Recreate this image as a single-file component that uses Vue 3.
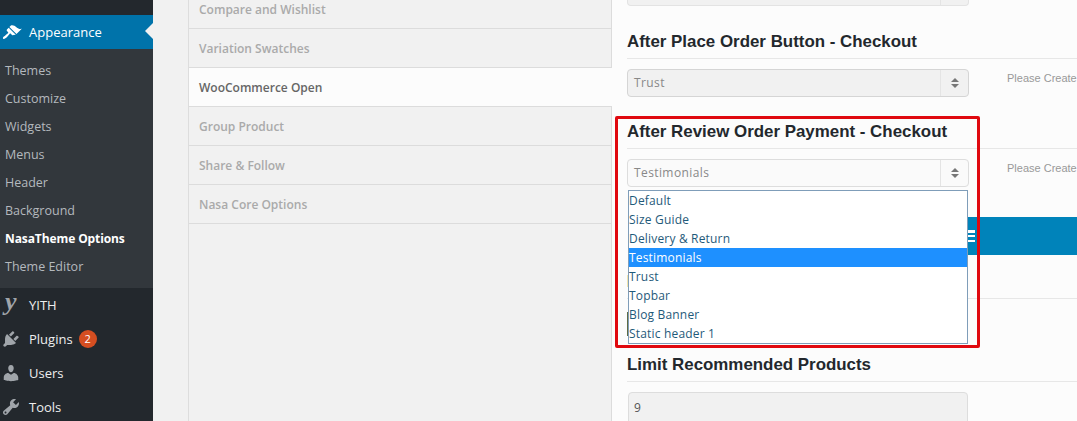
<template>
  <div class="page">
    <aside class="sidebar">
      <div class="menu-top"></div>
      <div class="menu-current">
        <svg class="icon" viewBox="0 0 20 20"><path d="M14.48 11.06L7.41 3.99l1.5-1.5c.5-.56 2.3-.47 3.51.32 1.21.8 1.43 1.28 2.91 2.1 1.18.64 2.45 1.26 4.45.85zm-.71.71L6.7 4.7 4.93 6.47c-.39.39-.39 1.02 0 1.41l1.06 1.06c.39.39.39 1.03 0 1.42-.6.6-1.43 1.11-2.21 1.69-.35.26-.7.53-1.01.84C1.43 13.23.4 14.91 1.2 15.7c.79.79 2.47-.23 3.83-1.59.31-.31.58-.66.84-1.01.58-.78 1.09-1.61 1.69-2.21.39-.39 1.03-.39 1.42 0l1.06 1.06c.39.39 1.02.39 1.41 0z" /></svg>
        <span>Appearance</span>
        <i class="arrow"></i>
      </div>
      <ul class="submenu">
        <li v-for="item in submenu" :key="item" :class="{ strong: item === 'NasaTheme Options' }">{{ item }}</li>
      </ul>
      <div class="menu-item" v-for="item in menu" :key="item.name">
        <svg v-if="item.icon" class="icon" viewBox="0 0 20 20"><path :d="item.icon" /></svg>
        <span v-else class="glyph">y</span>
        <span>{{ item.name }}</span>
        <b v-if="item.count" class="count">{{ item.count }}</b>
      </div>
    </aside>

    <nav class="tabs">
      <div v-for="tab in tabs" :key="tab" class="tab" :class="{ active: tab === 'WooCommerce Open' }">{{ tab }}</div>
    </nav>

    <main class="content">
      <div class="stub"></div>
      <section class="field first">
        <h3>After Place Order Button - Checkout</h3>
        <div class="row">
          <div class="select grey"><span>Trust</span><em><i class="up"></i><i class="down"></i></em></div>
          <p class="hint">Please Create</p>
        </div>
      </section>
      <section class="field second">
        <h3>After Review Order Payment - Checkout</h3>
        <div class="row">
          <div class="select"><span>Testimonials</span><em><i class="up"></i><i class="down"></i></em></div>
          <p class="hint">Please Create</p>
        </div>
      </section>
      <div class="save-bar"><i class="bars"></i></div>
      <div class="divider"></div>
      <section class="field third">
        <h3>Limit Recommended Products</h3>
        <div class="number">9</div>
      </section>

      <i class="peek yellow"></i>
      <i class="peek dark"></i>
      <ul class="listbox">
        <li v-for="opt in options" :key="opt" :class="{ selected: opt === 'Testimonials' }">{{ opt }}</li>
      </ul>
      <div class="highlight"></div>
    </main>
  </div>
</template>

<script setup>
const submenu = ['Themes', 'Customize', 'Widgets', 'Menus', 'Header', 'Background', 'NasaTheme Options', 'Theme Editor']

const menu = [
  { name: 'YITH' },
  { name: 'Plugins', count: 2, icon: 'M13.11 4.36L9.87 7.6 8 5.73l3.24-3.24c.35-.34 1.05-.2 1.56.32.52.51.66 1.21.31 1.55zm-8 1.77l.91-1.12 9.01 9.01-1.19.84c-.71.71-2.63 1.16-3.82 1.16H6.14L4.9 17.26c-.59.59-1.54.59-2.12 0-.59-.58-.59-1.53 0-2.12l1.24-1.24v-3.88c0-1.13.4-3.19 1.09-3.89zm7.26 3.97l3.24-3.24c.34-.35 1.04-.21 1.55.31.52.51.66 1.21.31 1.55l-3.24 3.25z' },
  { name: 'Users', icon: 'M10 9.25c-2.27 0-2.73-3.44-2.73-3.44C7 4.02 7.82 2 9.97 2c2.16 0 2.98 2.02 2.71 3.81 0 0-.41 3.44-2.68 3.44zm0 2.57L12.72 10c2.39 0 4.52 2.33 4.52 4.53v2.49s-3.65 1.13-7.24 1.13c-3.65 0-7.24-1.13-7.24-1.13v-2.49c0-2.25 1.94-4.48 4.47-4.48z' },
  { name: 'Tools', icon: 'M16.68 9.77c-1.34 1.34-3.3 1.67-4.95.99l-5.41 6.52c-.99.99-2.59.99-3.58 0s-.99-2.59 0-3.57l6.52-5.42c-.68-1.65-.35-3.61.99-4.95 1.28-1.28 3.12-1.62 4.72-1.06l-2.89 2.89 2.82 2.82 2.86-2.87c.53 1.58.18 3.39-1.08 4.65zM3.81 16.21c.4.39 1.04.39 1.43 0 .4-.4.4-1.04 0-1.43-.39-.4-1.03-.4-1.43 0-.39.39-.39 1.03 0 1.43z' }
]

const tabs = ['Compare and Wishlist', 'Variation Swatches', 'WooCommerce Open', 'Group Product', 'Share & Follow', 'Nasa Core Options']

const options = ['Default', 'Size Guide', 'Delivery & Return', 'Testimonials', 'Trust', 'Topbar', 'Blog Banner', 'Static header 1']
</script>

<style>
html, body {
  margin: 0;
  background: #f1f1f1;
  overflow: hidden;
}
</style>

<style scoped>
.page {
  display: flex;
  width: 1077px;
  height: 421px;
  overflow: hidden;
  background: #f1f1f1;
  font-family: "Open Sans", "Liberation Sans", sans-serif;
}
.sidebar {
  width: 153px;
  flex: none;
  background: #23282d;
  color: #eee;
  font-size: 13px;
}
.menu-top {
  height: 15px;
}
.menu-current {
  position: relative;
  display: flex;
  align-items: center;
  height: 34px;
  padding-left: 2px;
  background: #0073aa;
  color: #fff;
}
.icon {
  width: 20px;
  height: 20px;
  flex: none;
  margin-right: 8px;
  margin-left: 1px;
  fill: #a0a5aa;
}
.menu-current .icon {
  margin: 2px 7px 0 0;
  fill: #fff;
}
.glyph {
  width: 21px;
  margin: -7px 8px 0 0;
  padding-left: 5px;
  box-sizing: border-box;
  color: #a0a5aa;
  font-family: "Liberation Serif", serif;
  font-size: 26px;
  font-style: italic;
  font-weight: 700;
  line-height: 20px;
}
.arrow {
  position: absolute;
  right: 0;
  top: 8px;
  border: 8px solid transparent;
  border-right-color: #f1f1f1;
  border-left-width: 0;
}
.submenu {
  list-style: none;
  margin: 0;
  padding: 8px 0 7px 5px;
  background: #32373c;
  color: #b4b9be;
  font-size: 12.5px;
}
.submenu li {
  height: 28px;
  line-height: 28px;
}
.submenu li.strong {
  color: #fff;
  font-weight: 700;
  font-size: 12px;
  letter-spacing: -.1px;
}
.menu-item {
  display: flex;
  align-items: center;
  height: 34px;
}
.count {
  width: 18px;
  height: 18px;
  margin-left: 6px;
  border-radius: 50%;
  background: #d54e21;
  color: #fff;
  font-size: 11px;
  font-weight: 400;
  line-height: 18px;
  text-align: center;
}
.tabs {
  width: 424px;
  flex: none;
  margin-left: 35px;
  box-sizing: border-box;
  border-left: 1px solid #ddd;
  border-right: 1px solid #dcdcdc;
  color: #aaa;
  font-size: 12px;
  font-weight: 600;
}
.tab {
  height: 38px;
  padding-left: 10px;
  border-bottom: 1px solid #dcdcdc;
  line-height: 40px;
}
.tab:first-child {
  height: 28px;
  line-height: 19px;
}
.tab.active {
  position: relative;
  margin-right: -1px;
  background: #fcfcfc;
  color: #666;
}
.content {
  position: relative;
  flex: 1;
  min-width: 0;
  padding-left: 15px;
  background: #fcfcfc;
  overflow: hidden;
}
.stub {
  position: relative;
  width: 340px;
  height: 5px;
  border: 1px solid #e3e3e3;
  border-top: 0;
  border-radius: 0 0 4px 4px;
  background: #f1f1f1;
}
.stub::after {
  content: "";
  position: absolute;
  top: 0;
  right: 27px;
  bottom: 0;
  border-left: 1px solid #e4e4e4;
}
.field h3 {
  margin: 0;
  padding-bottom: 7px;
  border-bottom: 1px solid #e7e7e7;
  color: #23282d;
  font-family: "Liberation Sans", Arial, sans-serif;
  font-size: 16.9px;
  line-height: 19px;
}
.first {
  padding-top: 26px;
}
.second {
  padding-top: 25px;
}
.third {
  padding-top: 56px;
}
.row {
  display: flex;
  margin-top: 10px;
}
.select {
  display: flex;
  width: 340px;
  height: 26px;
  flex: none;
  align-items: center;
  border: 1px solid #ddd;
  border-radius: 4px;
  background: #fafafa;
  color: #888;
  font-size: 12px;
  letter-spacing: .4px;
}
.select.grey {
  background: #f1f1f1;
  border-color: #d5d5d5;
}
.select span {
  flex: 1;
  padding: 0 0 2px 6px;
}
.select em {
  display: flex;
  flex-direction: column;
  align-items: center;
  justify-content: center;
  gap: 2px;
  width: 27px;
  height: 100%;
  border-left: 1px solid #e4e4e4;
}
.up, .down {
  display: block;
  border: 4px solid transparent;
  border-top-width: 0;
  border-bottom: 4px solid #777;
}
.down {
  border-top: 4px solid #777;
  border-bottom-width: 0;
}
.hint {
  margin: 3px 0 0 38px;
  color: #999;
  font-family: "Liberation Sans", Arial, sans-serif;
  font-size: 11px;
  white-space: nowrap;
}
.save-bar {
  display: flex;
  align-items: center;
  height: 38px;
  margin: 30px 0 0 2px;
  padding-left: 338px;
  background: #0083ba;
}
.bars {
  width: 8px;
  height: 12px;
  background: repeating-linear-gradient(#fff 0 2.5px, transparent 2.5px 4.75px);
}
.divider {
  height: 43px;
  border-bottom: 1px solid #e7e7e7;
}
.number {
  width: 333px;
  height: 34px;
  margin: 10px 0 0 1px;
  padding-left: 5px;
  border: 1px solid #ddd;
  border-radius: 4px;
  background: #f1f1f1;
  color: #555;
  font-size: 12px;
  line-height: 30px;
}
.peek {
  position: absolute;
  left: 15px;
  width: 1px;
}
.yellow {
  top: 275px;
  height: 12px;
  background: #f1e3ac;
}
.dark {
  top: 312px;
  height: 24px;
  background: #5d6b45;
}
.listbox {
  position: absolute;
  left: 16px;
  top: 190px;
  width: 338px;
  margin: 0;
  padding: 0;
  list-style: none;
  border: 1px solid #7f9db9;
  background: #fff;
  color: #1f5a7a;
  font-size: 12px;
  letter-spacing: .18px;
}
.listbox li {
  height: 19px;
  line-height: 19px;
}
.listbox li.selected {
  background: #1e90ff;
  color: #fff;
}
.highlight {
  position: absolute;
  left: 3px;
  top: 116px;
  width: 359px;
  height: 226px;
  border: 3px solid #e0090f;
  border-radius: 2px;
  pointer-events: none;
}
</style>
